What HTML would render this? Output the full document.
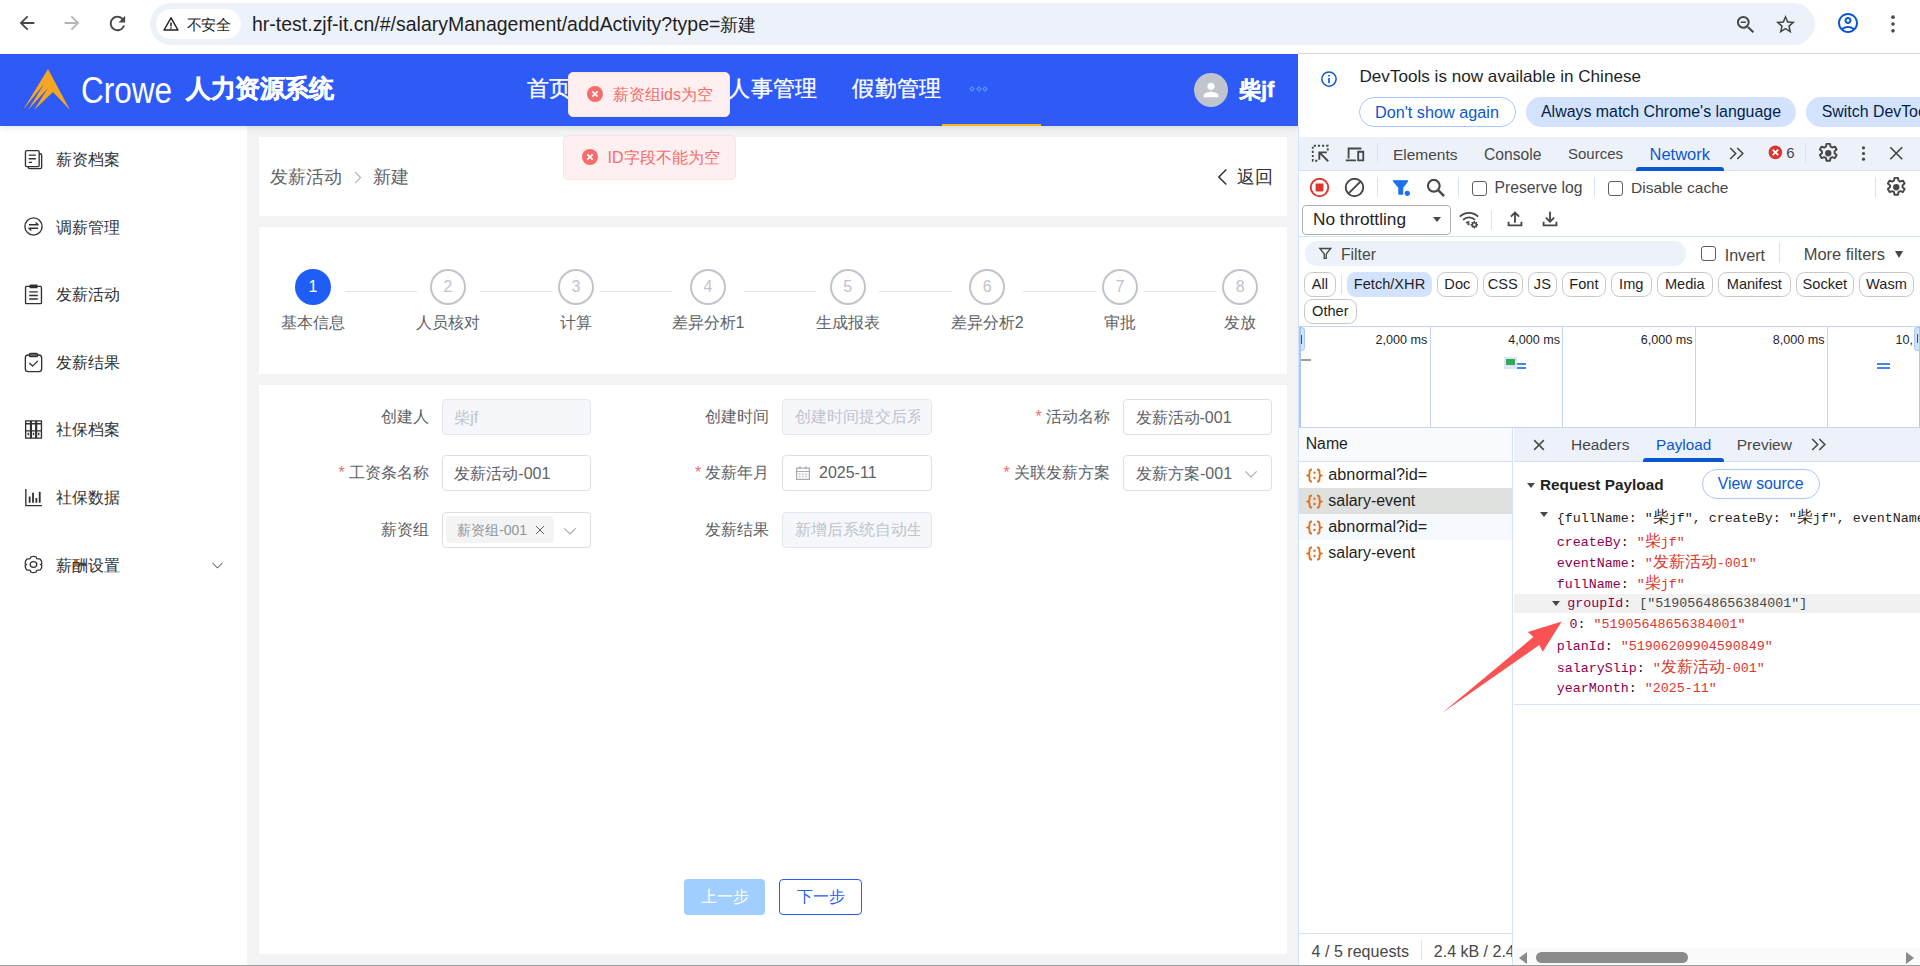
<!DOCTYPE html>
<html><head><meta charset="utf-8"><title>page</title><style>
*{box-sizing:border-box;margin:0;padding:0}
html,body{width:1920px;height:966px;overflow:hidden;background:#fff;font-family:"Liberation Sans",sans-serif}
#r{position:relative;width:1920px;height:966px;overflow:hidden}
.a{position:absolute}
.t{position:absolute;white-space:nowrap}
.c{display:inline-block;width:1em;text-align:center;font-style:normal;white-space:nowrap}
.m{position:absolute;white-space:pre;font-family:"Liberation Mono",monospace;font-size:13.330px;height:20px;line-height:20px}
</style></head><body><div id="r">
<!-- browser toolbar -->
<div class="a" style="left:0px;top:0px;width:1920px;height:54px;background:#fff"></div>
<svg class="a" style="left:16.0px;top:12.0px;" width="22" height="22" viewBox="0 0 24 24"><path fill="#474747" d="M20 11H7.83l5.59-5.59L12 4l-8 8 8 8 1.41-1.41L7.83 13H20v-2z"/></svg>
<svg class="a" style="left:61.0px;top:12.0px;" width="22" height="22" viewBox="0 0 24 24"><path fill="#b4b4b4" d="M4 11h12.17l-5.59-5.59L12 4l8 8-8 8-1.41-1.41L16.17 13H4v-2z"/></svg>
<svg class="a" style="left:105.5px;top:11.5px;" width="23" height="23" viewBox="0 0 24 24"><path fill="#474747" d="M17.65 6.35A7.958 7.958 0 0 0 12 4c-4.42 0-7.99 3.58-7.99 8s3.57 8 7.99 8c3.73 0 6.84-2.55 7.73-6h-2.08A5.99 5.99 0 0 1 12 18c-3.31 0-6-2.69-6-6s2.69-6 6-6c1.66 0 3.14.69 4.22 1.78L13 11h7V4l-2.35 2.35z"/></svg>
<div class="a" style="left:150px;top:3px;width:1665px;height:42px;background:#edf2fa;border-radius:21px"></div>
<div class="a" style="left:156px;top:9px;width:85px;height:30px;background:#fff;border-radius:15px"></div>
<svg class="a" style="left:162.0px;top:15.0px;" width="18" height="18" viewBox="0 0 24 24"><path fill="none" stroke="#1f1f1f" stroke-width="1.9" stroke-linejoin="round" d="M12 3.8 21.3 20H2.7z"/><path stroke="#1f1f1f" stroke-width="2" d="M12 10v5M12 16.3v2"/></svg>
<div class="t" style="top:10.5px;height:29px;line-height:29px;font-size:14.6px;color:#1f1f1f;left:186.5px;"><i class="c">不</i><i class="c">安</i><i class="c">全</i></div>
<div class="t" style="top:4.5px;height:39px;line-height:39px;font-size:19.49px;color:#1f1f1f;left:252px;">hr-test.zjf-it.cn/#/salaryManagement/addActivity?type=<span style="font-size:18px"><i class="c">新</i><i class="c">建</i></span></div>
<svg class="a" style="left:1733.75px;top:12.55px;" width="23.5" height="23.5" viewBox="0 0 24 24"><path fill="#474747" d="M15.5 14h-.79l-.28-.27A6.471 6.471 0 0 0 16 9.5 6.5 6.5 0 1 0 9.5 16c1.61 0 3.09-.59 4.23-1.57l.27.28v.79l5 4.99L20.49 19l-4.99-5zm-6 0C7.01 14 5 11.99 5 9.5S7.01 5 9.5 5 14 7.01 14 9.5 11.99 14 9.5 14zM6.800 8.700h5.400v1.600H6.800z"/></svg>
<svg class="a" style="left:1773.5px;top:12.5px;" width="23" height="23" viewBox="0 0 24 24"><path fill="#474747" d="M22 9.24l-7.19-.62L12 2 9.19 8.63 2 9.24l5.46 4.73L5.82 21 12 17.27 18.18 21l-1.63-7.03L22 9.24zM12 15.4l-3.76 2.27 1-4.28-3.32-2.88 4.38-.38L12 6.1l1.71 4.04 4.38.38-3.32 2.88 1 4.28L12 15.4z"/></svg>
<svg class="a" style="left:1835.5px;top:11.4px;" width="24" height="24" viewBox="0 0 24 24"><path fill="#0b57d0" d="M12 2C6.48 2 2 6.48 2 12s4.48 10 10 10 10-4.48 10-10S17.52 2 12 2zM7.35 18.5C8.66 17.56 10.26 17 12 17s3.34.56 4.65 1.5c-1.31.94-2.91 1.5-4.65 1.5s-3.34-.56-4.65-1.5zm10.79-1.38a9.947 9.947 0 0 0-12.28 0A7.957 7.957 0 0 1 4 12c0-4.42 3.58-8 8-8s8 3.58 8 8c0 1.95-.7 3.73-1.86 5.12zM12 6c-1.93 0-3.5 1.57-3.5 3.5S10.070 13 12 13s3.5-1.57 3.5-3.5S13.93 6 12 6zm0 5c-.83 0-1.5-.67-1.5-1.5S11.17 8 12 8s1.5.67 1.5 1.5S12.83 11 12 11z"/></svg>
<svg class="a" style="left:1880.5px;top:11.5px;" width="24" height="24" viewBox="0 0 24 24"><circle cx="12" cy="5.150" r="1.800" fill="#474747"/><circle cx="12" cy="12" r="1.800" fill="#474747"/><circle cx="12" cy="18.850" r="1.800" fill="#474747"/></svg>
<div class="a" style="left:1298px;top:53px;width:622px;height:1px;background:#d9d9d9"></div>
<!-- app -->
<div class="a" style="left:247px;top:126px;width:1051px;height:840px;background:#f2f3f5"></div>
<div class="a" style="left:0px;top:126px;width:247px;height:840px;background:#fff"></div>
<div class="a" style="left:259px;top:137px;width:1028px;height:79px;background:#fff"></div>
<div class="a" style="left:259px;top:227px;width:1028px;height:147px;background:#fff"></div>
<div class="a" style="left:259px;top:385px;width:1028px;height:569px;background:#fff"></div>
<div class="a" style="left:0px;top:54px;width:1298px;height:72px;background:#2e5bf7;box-shadow:0 2px 5px rgba(0,0,0,.10)"></div>
<svg class="a" style="left:22px;top:68px" width="50" height="44" viewBox="0 0 50 44"><path fill="#f5a623" d="M26 1 L48 42 L31 24 L12 42 L26 20 L6 42 L22 16 L1 42 Z"/></svg>
<div class="t" style="top:53.9px;height:73px;line-height:73px;font-size:36.5px;color:#fff;left:81px;transform:scaleX(0.8628);transform-origin:0 50%;">Crowe</div>
<div class="t" style="top:64.3px;height:49px;line-height:49px;font-size:24.6px;color:#fff;font-weight:bold;left:186px;-webkit-text-stroke:.4px #fff;"><i class="c">人</i><i class="c">力</i><i class="c">资</i><i class="c">源</i><i class="c">系</i><i class="c">统</i></div>
<div class="t" style="top:65.5px;height:45px;line-height:45px;font-size:22.4px;color:#fff;left:526.5px;-webkit-text-stroke:.35px #fff;letter-spacing:.1px;"><i class="c">首</i><i class="c">页</i></div>
<div class="t" style="top:65.5px;height:45px;line-height:45px;font-size:22.4px;color:#fff;left:606px;-webkit-text-stroke:.35px #fff;letter-spacing:.1px;"><i class="c">组</i><i class="c">织</i><i class="c">管</i><i class="c">理</i></div>
<div class="t" style="top:65.5px;height:45px;line-height:45px;font-size:22.4px;color:#fff;left:728px;-webkit-text-stroke:.35px #fff;letter-spacing:.1px;"><i class="c">人</i><i class="c">事</i><i class="c">管</i><i class="c">理</i></div>
<div class="t" style="top:65.5px;height:45px;line-height:45px;font-size:22.4px;color:#fff;left:852px;-webkit-text-stroke:.35px #fff;letter-spacing:.1px;"><i class="c">假</i><i class="c">勤</i><i class="c">管</i><i class="c">理</i></div>
<div class="a" style="left:970px;top:87px;width:4px;height:4px;border:1.200px solid #5fa2ff;transform:rotate(45deg)"></div>
<div class="a" style="left:976.5px;top:87px;width:4px;height:4px;border:1.200px solid #5fa2ff;transform:rotate(45deg)"></div>
<div class="a" style="left:983px;top:87px;width:4px;height:4px;border:1.200px solid #5fa2ff;transform:rotate(45deg)"></div>
<div class="a" style="left:942px;top:123.5px;width:99px;height:2.5px;background:#f8b51e"></div>
<div class="a" style="left:1194px;top:73px;width:34px;height:34px;background:#c0c4cc;border-radius:50%"></div>
<svg class="a" style="left:1200.0px;top:79.0px;" width="22" height="22" viewBox="0 0 24 24"><path fill="#fff" d="M12 12c2.21 0 4-1.79 4-4s-1.79-4-4-4-4 1.790-4 4 1.79 4 4 4zm0 2c-2.67 0-8 1.34-8 4v2h16v-2c0-2.66-5.33-4-8-4z"/></svg>
<div class="t" style="top:68.0px;height:44px;line-height:44px;font-size:22px;color:#fff;font-weight:bold;left:1239px;-webkit-text-stroke:.4px #fff;"><i class="c">柴</i>jf</div>
<svg class="a" style="left:21.5px;top:147.8px;" width="23" height="23" viewBox="0 0 24 24"><path fill="none" stroke="#303133" stroke-width="1.400" stroke-linejoin="round" d="M5.100 2.800h11.300q1.500 0 1.500 1.500v13.600q0 1.500-1.500 1.500H5.100q-1.500 0-1.500-1.500V4.300q0-1.500 1.500-1.500zM7 7.500h7.500M7 11.200h7.500M7 15h3.500M18 6h1q1.500 0 1.500 1.500v12.600q0 1.500-1.500 1.500H8q-1.500 0-1.500-1.500v-.6"/></svg>
<div class="t" style="top:144.0px;height:32px;line-height:32px;font-size:16px;color:#303133;left:56px;"><i class="c">薪</i><i class="c">资</i><i class="c">档</i><i class="c">案</i></div>
<svg class="a" style="left:21.5px;top:215.4px;" width="23" height="23" viewBox="0 0 24 24"><circle cx="12" cy="12" r="9" fill="none" stroke="#303133" stroke-width="1.400" stroke-linejoin="round"/><path fill="none" stroke="#303133" stroke-width="1.400" stroke-linejoin="round" d="M7.200 10.200h9.600l-2.600-2.500M16.800 13.800H7.200l2.600 2.500"/></svg>
<div class="t" style="top:211.6px;height:32px;line-height:32px;font-size:16px;color:#303133;left:56px;"><i class="c">调</i><i class="c">薪</i><i class="c">管</i><i class="c">理</i></div>
<svg class="a" style="left:21.5px;top:283.0px;" width="23" height="23" viewBox="0 0 24 24"><path fill="none" stroke="#303133" stroke-width="1.400" stroke-linejoin="round" d="M4.700 3.600h14.600q1 0 1 1v16q0 1-1 1H4.700q-1 0-1-1v-16q0-1 1-1zM8.500 2.300h7v2.600h-7zM7.500 9.300h9M7.500 13h9M7.500 16.700h9"/></svg>
<div class="t" style="top:279.2px;height:32px;line-height:32px;font-size:16px;color:#303133;left:56px;"><i class="c">发</i><i class="c">薪</i><i class="c">活</i><i class="c">动</i></div>
<svg class="a" style="left:21.5px;top:350.6px;" width="23" height="23" viewBox="0 0 24 24"><path fill="none" stroke="#303133" stroke-width="1.400" stroke-linejoin="round" d="M6.500 4.200h11q3 0 3 3v11.300q0 3-3 3h-11q-3 0-3-3V7.200q0-3 3-3zM8.800 2.500h6.400q1 0 1 1v1.400q0 1-1 1H8.800q-1 0-1-1V3.500q0-1 1-1zM7.800 12.500l3.300 3.300 5.400-5.500"/></svg>
<div class="t" style="top:346.8px;height:32px;line-height:32px;font-size:16px;color:#303133;left:56px;"><i class="c">发</i><i class="c">薪</i><i class="c">结</i><i class="c">果</i></div>
<svg class="a" style="left:21.5px;top:418.2px;" width="23" height="23" viewBox="0 0 24 24"><path fill="none" stroke="#303133" stroke-width="1.400" stroke-linejoin="round" d="M3.800 3h5.500v18H3.800zM9.300 3h5.500v18H9.300zM14.800 3h5.500v18h-5.500zM3.800 6h16.500M3.800 13.500h16.500M6.500 15.500v2.500M12 15.500v2.500M17.500 15.500v2.500"/><path stroke="#303133" stroke-width="2.200" d="M9.300 3v18M14.800 3v18"/></svg>
<div class="t" style="top:414.4px;height:32px;line-height:32px;font-size:16px;color:#303133;left:56px;"><i class="c">社</i><i class="c">保</i><i class="c">档</i><i class="c">案</i></div>
<svg class="a" style="left:21.5px;top:485.8px;" width="23" height="23" viewBox="0 0 24 24"><path fill="none" stroke="#303133" stroke-width="1.400" stroke-linejoin="round" stroke-width="1.600" d="M4 3v17.500h16.800"/><path stroke="#303133" stroke-width="1.900" d="M8 11v6.500M11.500 7v10.500M15 12.500v5M18.500 6v11.500"/></svg>
<div class="t" style="top:482.0px;height:32px;line-height:32px;font-size:16px;color:#303133;left:56px;"><i class="c">社</i><i class="c">保</i><i class="c">数</i><i class="c">据</i></div>
<svg class="a" style="left:21.5px;top:553.4px;" width="23" height="23" viewBox="0 0 24 24"><g transform="translate(0 1.300) scale(1 .89)"><path fill="none" stroke="#303133" stroke-width="1.400" stroke-linejoin="round" d="M9.300 3.200q2.700-1.700 5.400 0l.7 1.900 3.600.6q1.900 2.500 1.700 5.300L19.200 12l1.500 1q.2 2.800-1.700 5.300l-3.600.6-.7 1.900q-2.700 1.700-5.400 0l-.7-1.900-3.600-.6Q3.100 15.800 3.300 13l1.500-1-1.500-1q-.2-2.800 1.700-5.300l3.600-.6z"/><circle cx="12" cy="12" r="3.400" fill="none" stroke="#303133" stroke-width="1.400" stroke-linejoin="round"/></g></svg>
<div class="t" style="top:549.6px;height:32px;line-height:32px;font-size:16px;color:#303133;left:56px;"><i class="c">薪</i><i class="c">酬</i><i class="c">设</i><i class="c">置</i></div>
<svg class="a" style="left:211.2px;top:558.7px;" width="13" height="13" viewBox="0 0 24 24"><path fill="none" stroke="#303133" stroke-width="1.700" d="M3 7.200l9 9.600 9-9.600"/></svg>
<div class="t" style="top:158.5px;height:36px;line-height:36px;font-size:18px;color:#606266;left:270px;"><i class="c">发</i><i class="c">薪</i><i class="c">活</i><i class="c">动</i></div>
<svg class="a" style="left:350.0px;top:169.5px;" width="15" height="15" viewBox="0 0 24 24"><path fill="none" stroke="#a8abb2" stroke-width="1.700" d="M8 3l9 9-9 9"/></svg>
<div class="t" style="top:158.5px;height:36px;line-height:36px;font-size:18px;color:#606266;left:373px;"><i class="c">新</i><i class="c">建</i></div>
<svg class="a" style="left:1213.0px;top:166.5px;" width="20" height="20" viewBox="0 0 24 24"><path fill="none" stroke="#303133" stroke-width="1.800" d="M16 3l-9 9 9 9"/></svg>
<div class="t" style="top:158.5px;height:36px;line-height:36px;font-size:18px;color:#303133;left:1236.5px;"><i class="c">返</i><i class="c">回</i></div>
<div class="a" style="left:345px;top:291px;width:72px;height:1px;background:#dfe2e8"></div>
<div class="a" style="left:480px;top:291px;width:72px;height:1px;background:#dfe2e8"></div>
<div class="a" style="left:600px;top:291px;width:72px;height:1px;background:#dfe2e8"></div>
<div class="a" style="left:744px;top:291px;width:72px;height:1px;background:#dfe2e8"></div>
<div class="a" style="left:879px;top:291px;width:72.5px;height:1px;background:#dfe2e8"></div>
<div class="a" style="left:1023px;top:291px;width:73px;height:1px;background:#dfe2e8"></div>
<div class="a" style="left:1144px;top:291px;width:72px;height:1px;background:#dfe2e8"></div>
<div class="a" style="left:295px;top:269px;width:36px;height:36px;background:#1e5ef7;border-radius:50%"></div>
<div class="t" style="top:271.0px;height:32px;line-height:32px;font-size:16px;color:#fff;left:13px;width:600px;text-align:center;">1</div>
<div class="t" style="top:306.5px;height:32px;line-height:32px;font-size:16px;color:#606266;left:13px;width:600px;text-align:center;"><i class="c">基</i><i class="c">本</i><i class="c">信</i><i class="c">息</i></div>
<div class="a" style="left:430px;top:269px;width:36px;height:36px;border:2px solid #c0c4cc;border-radius:50%;background:#fff"></div>
<div class="t" style="top:271.0px;height:32px;line-height:32px;font-size:16px;color:#c0c4cc;left:148px;width:600px;text-align:center;">2</div>
<div class="t" style="top:306.5px;height:32px;line-height:32px;font-size:16px;color:#606266;left:148px;width:600px;text-align:center;"><i class="c">人</i><i class="c">员</i><i class="c">核</i><i class="c">对</i></div>
<div class="a" style="left:558px;top:269px;width:36px;height:36px;border:2px solid #c0c4cc;border-radius:50%;background:#fff"></div>
<div class="t" style="top:271.0px;height:32px;line-height:32px;font-size:16px;color:#c0c4cc;left:276px;width:600px;text-align:center;">3</div>
<div class="t" style="top:306.5px;height:32px;line-height:32px;font-size:16px;color:#606266;left:276px;width:600px;text-align:center;"><i class="c">计</i><i class="c">算</i></div>
<div class="a" style="left:690px;top:269px;width:36px;height:36px;border:2px solid #c0c4cc;border-radius:50%;background:#fff"></div>
<div class="t" style="top:271.0px;height:32px;line-height:32px;font-size:16px;color:#c0c4cc;left:408px;width:600px;text-align:center;">4</div>
<div class="t" style="top:306.5px;height:32px;line-height:32px;font-size:16px;color:#606266;left:408px;width:600px;text-align:center;"><i class="c">差</i><i class="c">异</i><i class="c">分</i><i class="c">析</i>1</div>
<div class="a" style="left:829.6px;top:269px;width:36px;height:36px;border:2px solid #c0c4cc;border-radius:50%;background:#fff"></div>
<div class="t" style="top:271.0px;height:32px;line-height:32px;font-size:16px;color:#c0c4cc;left:547.6px;width:600px;text-align:center;">5</div>
<div class="t" style="top:306.5px;height:32px;line-height:32px;font-size:16px;color:#606266;left:547.6px;width:600px;text-align:center;"><i class="c">生</i><i class="c">成</i><i class="c">报</i><i class="c">表</i></div>
<div class="a" style="left:969.2px;top:269px;width:36px;height:36px;border:2px solid #c0c4cc;border-radius:50%;background:#fff"></div>
<div class="t" style="top:271.0px;height:32px;line-height:32px;font-size:16px;color:#c0c4cc;left:687.2px;width:600px;text-align:center;">6</div>
<div class="t" style="top:306.5px;height:32px;line-height:32px;font-size:16px;color:#606266;left:687.2px;width:600px;text-align:center;"><i class="c">差</i><i class="c">异</i><i class="c">分</i><i class="c">析</i>2</div>
<div class="a" style="left:1102px;top:269px;width:36px;height:36px;border:2px solid #c0c4cc;border-radius:50%;background:#fff"></div>
<div class="t" style="top:271.0px;height:32px;line-height:32px;font-size:16px;color:#c0c4cc;left:820px;width:600px;text-align:center;">7</div>
<div class="t" style="top:306.5px;height:32px;line-height:32px;font-size:16px;color:#606266;left:820px;width:600px;text-align:center;"><i class="c">审</i><i class="c">批</i></div>
<div class="a" style="left:1222.2px;top:269px;width:36px;height:36px;border:2px solid #c0c4cc;border-radius:50%;background:#fff"></div>
<div class="t" style="top:271.0px;height:32px;line-height:32px;font-size:16px;color:#c0c4cc;left:940.2px;width:600px;text-align:center;">8</div>
<div class="t" style="top:306.5px;height:32px;line-height:32px;font-size:16px;color:#606266;left:940.2px;width:600px;text-align:center;"><i class="c">发</i><i class="c">放</i></div>
<div class="a" style="left:568px;top:72px;width:162px;height:45px;background:#fef0f0;border:1px solid #fde2e2;border-radius:5px"></div>
<svg class="a" style="left:587.0px;top:86.0px;" width="16" height="16" viewBox="0 0 16 16"><circle cx="8" cy="8" r="8" fill="#f56c6c"/><path stroke="#fff" stroke-width="1.7" d="M5.300 5.300l5.400 5.400M10.700 5.300l-5.400 5.400"/></svg>
<div class="t" style="top:78.5px;height:32px;line-height:32px;font-size:16px;color:#f56c6c;left:612.5px;"><i class="c">薪</i><i class="c">资</i><i class="c">组</i>ids<i class="c">为</i><i class="c">空</i></div>
<div class="a" style="left:562.5px;top:135px;width:173px;height:44.5px;background:#fef0f0;border:1px solid #fde2e2;border-radius:5px"></div>
<svg class="a" style="left:581.5px;top:149.0px;" width="16" height="16" viewBox="0 0 16 16"><circle cx="8" cy="8" r="8" fill="#f56c6c"/><path stroke="#fff" stroke-width="1.7" d="M5.300 5.300l5.400 5.400M10.700 5.300l-5.400 5.400"/></svg>
<div class="t" style="top:141.5px;height:32px;line-height:32px;font-size:16px;color:#f56c6c;left:607.5px;">ID<i class="c">字</i><i class="c">段</i><i class="c">不</i><i class="c">能</i><i class="c">为</i><i class="c">空</i></div>
<div class="t" style="top:401.0px;height:32px;line-height:32px;font-size:16px;color:#606266;right:1491.4px;text-align:right;"><i class="c">创</i><i class="c">建</i><i class="c">人</i></div>
<div class="a" style="left:442px;top:399px;width:149px;height:36px;background:#f5f7fa;border:1px solid #e4e7ed;border-radius:4px"></div>
<div class="t" style="top:401.5px;height:32px;line-height:32px;font-size:16px;color:#c0c4cc;left:454.3px;"><i class="c">柴</i>jf</div>
<div class="t" style="top:457.0px;height:32px;line-height:32px;font-size:16px;color:#606266;right:1491.4px;text-align:right;"><span style="color:#f56c6c;margin-right:4px;font-size:16px">*</span><i class="c">工</i><i class="c">资</i><i class="c">条</i><i class="c">名</i><i class="c">称</i></div>
<div class="a" style="left:442px;top:455px;width:149px;height:36px;background:#fff;border:1px solid #dcdfe6;border-radius:4px"></div>
<div class="t" style="top:457.5px;height:32px;line-height:32px;font-size:16px;color:#606266;left:454.3px;"><i class="c">发</i><i class="c">薪</i><i class="c">活</i><i class="c">动</i>-001</div>
<div class="t" style="top:514.0px;height:32px;line-height:32px;font-size:16px;color:#606266;right:1491.4px;text-align:right;"><i class="c">薪</i><i class="c">资</i><i class="c">组</i></div>
<div class="a" style="left:442px;top:512px;width:149px;height:36px;background:#fff;border:1px solid #dcdfe6;border-radius:4px"></div>
<div class="a" style="left:446px;top:516px;width:108px;height:27px;background:#f4f4f5;border-radius:4px"></div>
<div class="t" style="top:516.0px;height:28px;line-height:28px;font-size:14px;color:#909399;left:457px;"><i class="c">薪</i><i class="c">资</i><i class="c">组</i>-001</div>
<svg class="a" style="left:533.6px;top:524.0px;" width="12" height="12" viewBox="0 0 24 24"><path stroke="#606266" stroke-width="2" d="M4 4l16 16M20 4L4 20"/></svg>
<svg class="a" style="left:561.5px;top:522.5px;" width="16" height="16" viewBox="0 0 24 24"><path fill="none" stroke="#a8abb2" stroke-width="1.800" d="M3.500 8l8.500 8.500L20.500 8"/></svg>
<div class="t" style="top:401.0px;height:32px;line-height:32px;font-size:16px;color:#606266;right:1150.7px;text-align:right;"><i class="c">创</i><i class="c">建</i><i class="c">时</i><i class="c">间</i></div>
<div class="a" style="left:782.3px;top:399px;width:149.3px;height:36px;background:#f5f7fa;border:1px solid #e4e7ed;border-radius:4px"></div>
<div class="t" style="left:794.5px;top:401px;height:32px;line-height:32px;font-size:16px;color:#c0c4cc;width:125px;overflow:hidden"><i class="c">创</i><i class="c">建</i><i class="c">时</i><i class="c">间</i><i class="c">提</i><i class="c">交</i><i class="c">后</i><i class="c">系</i><i class="c">统</i><i class="c">自</i><i class="c">动</i><i class="c">生</i><i class="c">成</i></div>
<div class="t" style="top:457.0px;height:32px;line-height:32px;font-size:16px;color:#606266;right:1150.7px;text-align:right;"><span style="color:#f56c6c;margin-right:4px;font-size:16px">*</span><i class="c">发</i><i class="c">薪</i><i class="c">年</i><i class="c">月</i></div>
<div class="a" style="left:782.3px;top:455px;width:149.3px;height:36px;background:#fff;border:1px solid #dcdfe6;border-radius:4px"></div>
<svg class="a" style="left:793.5px;top:464.0px;" width="18" height="18" viewBox="0 0 24 24"><path fill="none" stroke="#a8abb2" stroke-width="1.600" d="M3.500 5.500h17v15h-17zM3.500 10h17M8 3v4M16 3v4"/><path stroke="#a8abb2" stroke-width="1.600" stroke-dasharray="2 2.300" d="M6.500 13.500h12M6.500 17h12"/></svg>
<div class="t" style="top:457.0px;height:32px;line-height:32px;font-size:16px;color:#606266;left:819px;">2025-11</div>
<div class="t" style="top:514.0px;height:32px;line-height:32px;font-size:16px;color:#606266;right:1150.7px;text-align:right;"><i class="c">发</i><i class="c">薪</i><i class="c">结</i><i class="c">果</i></div>
<div class="a" style="left:782.3px;top:512px;width:149.3px;height:36px;background:#f5f7fa;border:1px solid #e4e7ed;border-radius:4px"></div>
<div class="t" style="left:794.5px;top:514px;height:32px;line-height:32px;font-size:16px;color:#c0c4cc;width:125px;overflow:hidden"><i class="c">新</i><i class="c">增</i><i class="c">后</i><i class="c">系</i><i class="c">统</i><i class="c">自</i><i class="c">动</i><i class="c">生</i><i class="c">成</i></div>
<div class="t" style="top:401.0px;height:32px;line-height:32px;font-size:16px;color:#606266;right:810.4px;text-align:right;"><span style="color:#f56c6c;margin-right:4px;font-size:16px">*</span><i class="c">活</i><i class="c">动</i><i class="c">名</i><i class="c">称</i></div>
<div class="a" style="left:1123.3px;top:399px;width:148.7px;height:36px;background:#fff;border:1px solid #dcdfe6;border-radius:4px"></div>
<div class="t" style="top:401.5px;height:32px;line-height:32px;font-size:16px;color:#606266;left:1135.5px;"><i class="c">发</i><i class="c">薪</i><i class="c">活</i><i class="c">动</i>-001</div>
<div class="t" style="top:457.0px;height:32px;line-height:32px;font-size:16px;color:#606266;right:810.4px;text-align:right;"><span style="color:#f56c6c;margin-right:4px;font-size:16px">*</span><i class="c">关</i><i class="c">联</i><i class="c">发</i><i class="c">薪</i><i class="c">方</i><i class="c">案</i></div>
<div class="a" style="left:1123.3px;top:455px;width:148.7px;height:36px;background:#fff;border:1px solid #dcdfe6;border-radius:4px"></div>
<div class="t" style="top:457.5px;height:32px;line-height:32px;font-size:16px;color:#606266;left:1136px;"><i class="c">发</i><i class="c">薪</i><i class="c">方</i><i class="c">案</i>-001</div>
<svg class="a" style="left:1242.5px;top:466.0px;" width="16" height="16" viewBox="0 0 24 24"><path fill="none" stroke="#a8abb2" stroke-width="1.800" d="M3.500 8l8.500 8.500L20.500 8"/></svg>
<div class="a" style="left:684px;top:879px;width:81px;height:36px;background:#a0cfff;border-radius:4px"></div>
<div class="t" style="top:881.0px;height:32px;line-height:32px;font-size:16px;color:#fff;left:424.5px;width:600px;text-align:center;"><i class="c">上</i><i class="c">一</i><i class="c">步</i></div>
<div class="a" style="left:779px;top:879px;width:83px;height:36px;background:#fff;border:1px solid #2e5bf7;border-radius:4px"></div>
<div class="t" style="top:881.0px;height:32px;line-height:32px;font-size:16px;color:#2e5bf7;left:520.5px;width:600px;text-align:center;"><i class="c">下</i><i class="c">一</i><i class="c">步</i></div>
<!-- devtools -->
<div class="a" style="left:1298px;top:54px;width:622px;height:912px;background:#fff"></div>
<div class="a" style="left:1298px;top:126px;width:1px;height:840px;background:#d3e3fd"></div>
<svg class="a" style="left:1320.0px;top:70.0px;" width="18" height="18" viewBox="0 0 24 24"><circle cx="12" cy="12" r="9.500" fill="none" stroke="#0b57d0" stroke-width="2"/><path stroke="#0b57d0" stroke-width="2.200" d="M12 10.500v7M12 6.500v2.200"/></svg>
<div class="t" style="top:60.2px;height:34px;line-height:34px;font-size:17.11px;color:#1f1f1f;left:1359.5px;">DevTools is now available in Chinese</div>
<div class="a" style="left:1359px;top:97px;width:157px;height:30px;border:1px solid #a8c7fa;border-radius:15px;background:#fff"></div>
<div class="t" style="top:96.1px;height:32px;line-height:32px;font-size:16.23px;color:#0b57d0;left:1375px;">Don't show again</div>
<div class="a" style="left:1526px;top:97px;width:270px;height:30px;background:#d3e3fd;border-radius:15px"></div>
<div class="t" style="top:96.1px;height:32px;line-height:32px;font-size:15.91px;color:#041e49;left:1541px;">Always match Chrome's language</div>
<div class="a" style="left:1806px;top:97px;width:130px;height:30px;background:#d3e3fd;border-radius:15px"></div>
<div class="t" style="top:96.1px;height:32px;line-height:32px;font-size:15.9px;color:#041e49;left:1821.7px;">Switch DevTools to Chinese</div>
<div class="a" style="left:1299px;top:137px;width:621px;height:33.5px;background:#edf2fa"></div>
<div class="a" style="left:1299px;top:170px;width:621px;height:1px;background:#d3e3fd"></div>
<svg class="a" style="left:1308.75px;top:142.45px;" width="22.5" height="22.5" viewBox="0 0 24 24"><path fill="none" stroke="#474747" stroke-width="1.900" stroke-dasharray="2.300 2.100" d="M20 9V4H4v16h5"/><path fill="none" stroke="#474747" stroke-width="2" d="M11 11l9.500 9.500M11 19v-8h8"/></svg>
<svg class="a" style="left:1343.5px;top:142.5px;" width="22" height="22" viewBox="0 0 24 24"><path fill="none" stroke="#474747" stroke-width="2" d="M5 17V6h14M2 19h11M15.500 9.500h5.500v9.500h-5.500z"/></svg>
<div class="a" style="left:1377px;top:143.3px;width:1px;height:19.4px;background:#d3e3fd"></div>
<div class="t" style="top:138.5px;height:31px;line-height:31px;font-size:15.47px;color:#474747;left:1393px;">Elements</div>
<div class="t" style="top:138.5px;height:31px;line-height:31px;font-size:15.67px;color:#474747;left:1484px;">Console</div>
<div class="t" style="top:139.0px;height:30px;line-height:30px;font-size:14.99px;color:#474747;left:1568px;">Sources</div>
<div class="t" style="top:137.5px;height:33px;line-height:33px;font-size:16.5px;color:#0b57d0;left:1649.5px;">Network</div>
<div class="a" style="left:1636px;top:167px;width:88px;height:3.5px;background:#0b57d0;border-radius:3px 3px 0 0"></div>
<svg class="a" style="left:1727.0px;top:143.8px;" width="19" height="19" viewBox="0 0 24 24"><path fill="none" stroke="#474747" stroke-width="2" d="M4 5l7 7-7 7M13 5l7 7-7 7"/></svg>
<svg class="a" style="left:1768.1px;top:145.3px;" width="14.8" height="14.8" viewBox="0 0 24 24"><circle cx="12" cy="12" r="11" fill="#dc362e"/><path stroke="#fff" stroke-width="3" d="M7.500 7.500l9 9M16.500 7.500l-9 9"/></svg>
<div class="t" style="top:137.8px;height:30px;line-height:30px;font-size:15px;color:#474747;left:1786.3px;">6</div>
<div class="a" style="left:1805px;top:143.3px;width:1px;height:19.4px;background:#d3e3fd"></div>
<svg class="a" style="left:1815.95px;top:141.05px;" width="24.5" height="24.5" viewBox="0 0 24 24"><path fill="none" stroke="#474747" stroke-width="1.900" stroke-linejoin="round" d="M10.300 2.800h3.400l.5 2.600 1.800 1 2.500-.9 1.700 2.900-2 1.700v2l2 1.700-1.700 2.900-2.500-.900-1.800 1-.5 2.600h-3.400l-.5-2.600-1.800-1-2.500.9-1.700-2.900 2-1.700v-2l-2-1.700 1.700-2.900 2.500.9 1.800-1z"/><circle cx="12" cy="12" r="3.100" fill="#474747"/></svg>
<svg class="a" style="left:1852.8px;top:143.2px;" width="21" height="21" viewBox="0 0 24 24"><circle cx="12" cy="5.500" r="1.800" fill="#474747"/><circle cx="12" cy="12" r="1.800" fill="#474747"/><circle cx="12" cy="18.500" r="1.800" fill="#474747"/></svg>
<svg class="a" style="left:1886.45px;top:143.05px;" width="20.5" height="20.5" viewBox="0 0 24 24"><path stroke="#474747" stroke-width="2" d="M5 5l14 14M19 5L5 19"/></svg>
<svg class="a" style="left:1309.0px;top:176.5px;" width="21" height="21" viewBox="0 0 24 24"><circle cx="12" cy="12" r="10" fill="none" stroke="#dc362e" stroke-width="2.200"/><rect x="7.500" y="7.500" width="9" height="9" rx="1" fill="#dc362e"/></svg>
<svg class="a" style="left:1344.0px;top:176.5px;" width="21" height="21" viewBox="0 0 24 24"><circle cx="12" cy="12" r="10" fill="none" stroke="#474747" stroke-width="2.200"/><path stroke="#474747" stroke-width="2.200" d="M5 19L19 5"/></svg>
<div class="a" style="left:1377px;top:177px;width:1px;height:19.7px;background:#d3e3fd"></div>
<svg class="a" style="left:1390px;top:178px" width="22" height="20" viewBox="1390 178 22 20"><path fill="#1a73e8" stroke="#1a73e8" stroke-width="1.200" stroke-linejoin="round" d="M1393.300 180.800h14.400l-5 6.800v6.500h-3.800v-6.500z"/><circle cx="1407.300" cy="193.300" r="2.600" fill="#1a73e8"/></svg>
<svg class="a" style="left:1424.05px;top:175.95px;" width="23.5" height="23.5" viewBox="0 0 24 24"><circle cx="10" cy="10" r="6" fill="none" stroke="#474747" stroke-width="2.200"/><path stroke="#474747" stroke-width="2.400" d="M14.500 14.500l6 6"/></svg>
<div class="a" style="left:1458px;top:177px;width:1px;height:19.7px;background:#d3e3fd"></div>
<div class="a" style="left:1472px;top:180.5px;width:15px;height:15px;border:1.500px solid #5e5e5e;border-radius:3px;background:#fff"></div>
<div class="t" style="top:172.0px;height:31px;line-height:31px;font-size:15.68px;color:#474747;left:1494.5px;">Preserve log</div>
<div class="a" style="left:1594px;top:177px;width:1px;height:19.7px;background:#d3e3fd"></div>
<div class="a" style="left:1608px;top:180.5px;width:15px;height:15px;border:1.500px solid #5e5e5e;border-radius:3px;background:#fff"></div>
<div class="t" style="top:172.0px;height:31px;line-height:31px;font-size:15.52px;color:#474747;left:1631px;">Disable cache</div>
<div class="a" style="left:1875px;top:177px;width:1px;height:19.7px;background:#d3e3fd"></div>
<svg class="a" style="left:1884.25px;top:175.05px;" width="24.5" height="24.5" viewBox="0 0 24 24"><path fill="none" stroke="#474747" stroke-width="1.900" stroke-linejoin="round" d="M10.300 2.800h3.400l.5 2.600 1.800 1 2.500-.9 1.700 2.900-2 1.700v2l2 1.700-1.700 2.900-2.500-.900-1.800 1-.5 2.600h-3.400l-.5-2.600-1.800-1-2.500.9-1.700-2.900 2-1.700v-2l-2-1.700 1.700-2.900 2.500.9 1.800-1z"/><circle cx="12" cy="12" r="3.100" fill="#474747"/></svg>
<div class="a" style="left:1302px;top:205px;width:148.7px;height:29.7px;border:1px solid #b0b0b0;border-radius:4px;background:#fff"></div>
<div class="t" style="top:202.0px;height:34px;line-height:34px;font-size:17.25px;color:#1f1f1f;left:1313px;">No throttling</div>
<div class="a" style="left:1432.700px;top:217px;border:4.700px solid transparent;border-top:5.200px solid #474747"></div>
<svg class="a" style="left:1458.0px;top:208.0px;" width="22" height="22" viewBox="0 0 24 24"><path fill="none" stroke="#474747" stroke-width="2" d="M2 9.500c5.500-5.500 14.500-5.500 20 0M5.500 13c3.600-3.600 9.400-3.600 13 0M9 16.500c1-1 2.200-1.500 3.300-1.400"/><path fill="#474747" d="M9.500 17.500l3 -1.800v3.600z"/><circle cx="17.800" cy="18.300" r="2.200" fill="none" stroke="#474747" stroke-width="1.700"/><path stroke="#474747" stroke-width="1.500" d="M17.800 14.300v1.500M17.800 20.800v1.500M13.800 18.300h1.500M20.300 18.300h1.500M15 15.500l1 1M19.600 20.100l1 1M20.600 15.500l-1 1M16 20.100l-1 1"/></svg>
<div class="a" style="left:1491px;top:210.3px;width:1px;height:19.4px;background:#d3e3fd"></div>
<svg class="a" style="left:1503.5px;top:208.0px;" width="22" height="22" viewBox="0 0 24 24"><path fill="none" stroke="#474747" stroke-width="2" d="M12 16V5M7.500 9.500L12 5l4.500 4.500M5 15v4h14v-4"/></svg>
<svg class="a" style="left:1538.5px;top:208.0px;" width="22" height="22" viewBox="0 0 24 24"><path fill="none" stroke="#474747" stroke-width="2" d="M12 4v11M7.500 10.500L12 15l4.500-4.500M5 15v4h14v-4"/></svg>
<div class="a" style="left:1299px;top:236px;width:621px;height:1px;background:#d3e3fd"></div>
<div class="a" style="left:1305px;top:241px;width:381px;height:25px;background:#edf2fa;border-radius:12px"></div>
<svg class="a" style="left:1316.75px;top:244.75px;" width="16.5" height="16.5" viewBox="0 0 24 24"><path fill="none" stroke="#474747" stroke-width="2" d="M4 5h16l-6.500 8v6.500h-3V13z"/></svg>
<div class="t" style="top:238.5px;height:32px;line-height:32px;font-size:15.75px;color:#474747;left:1341px;">Filter</div>
<div class="a" style="left:1701px;top:246px;width:15px;height:15px;border:1.500px solid #5e5e5e;border-radius:3px;background:#fff"></div>
<div class="t" style="top:238.5px;height:32px;line-height:32px;font-size:16.11px;color:#474747;left:1724.7px;">Invert</div>
<div class="a" style="left:1779px;top:243.3px;width:1px;height:19.4px;background:#d3e3fd"></div>
<div class="t" style="top:238.0px;height:33px;line-height:33px;font-size:16.44px;color:#474747;left:1803.7px;">More filters</div>
<div class="a" style="left:1895px;top:250.700px;border:4.650px solid transparent;border-top:7px solid #474747"></div>
<div class="a" style="left:1304px;top:272px;width:31.7px;height:24.7px;border:1px solid #c7c7c7;background:#fff;border-radius:8.500px;text-align:center;font-size:14.600px;line-height:23.5px;color:#1f1f1f;white-space:nowrap">All</div>
<div class="a" style="left:1341px;top:274.5px;width:1px;height:19.2px;background:#d3e3fd"></div>
<div class="a" style="left:1347px;top:272px;width:85px;height:24.7px;background:#d3e3fd;border-radius:8.500px;text-align:center;font-size:14.600px;line-height:25.5px;color:#1f1f1f;white-space:nowrap">Fetch/XHR</div>
<div class="a" style="left:1437px;top:272px;width:40.7px;height:24.7px;border:1px solid #c7c7c7;background:#fff;border-radius:8.500px;text-align:center;font-size:14.600px;line-height:23.5px;color:#1f1f1f;white-space:nowrap">Doc</div>
<div class="a" style="left:1483px;top:272px;width:39.7px;height:24.7px;border:1px solid #c7c7c7;background:#fff;border-radius:8.500px;text-align:center;font-size:14.600px;line-height:23.5px;color:#1f1f1f;white-space:nowrap">CSS</div>
<div class="a" style="left:1528px;top:272px;width:28.7px;height:24.7px;border:1px solid #c7c7c7;background:#fff;border-radius:8.500px;text-align:center;font-size:14.600px;line-height:23.5px;color:#1f1f1f;white-space:nowrap">JS</div>
<div class="a" style="left:1562px;top:272px;width:43.7px;height:24.7px;border:1px solid #c7c7c7;background:#fff;border-radius:8.500px;text-align:center;font-size:14.600px;line-height:23.5px;color:#1f1f1f;white-space:nowrap">Font</div>
<div class="a" style="left:1611px;top:272px;width:40.5px;height:24.7px;border:1px solid #c7c7c7;background:#fff;border-radius:8.500px;text-align:center;font-size:14.600px;line-height:23.5px;color:#1f1f1f;white-space:nowrap">Img</div>
<div class="a" style="left:1657px;top:272px;width:55.5px;height:24.7px;border:1px solid #c7c7c7;background:#fff;border-radius:8.500px;text-align:center;font-size:14.600px;line-height:23.5px;color:#1f1f1f;white-space:nowrap">Media</div>
<div class="a" style="left:1718px;top:272px;width:72.6px;height:24.7px;border:1px solid #c7c7c7;background:#fff;border-radius:8.500px;text-align:center;font-size:14.600px;line-height:23.5px;color:#1f1f1f;white-space:nowrap">Manifest</div>
<div class="a" style="left:1796px;top:272px;width:57.7px;height:24.7px;border:1px solid #c7c7c7;background:#fff;border-radius:8.500px;text-align:center;font-size:14.600px;line-height:23.5px;color:#1f1f1f;white-space:nowrap">Socket</div>
<div class="a" style="left:1859px;top:272px;width:55px;height:24.7px;border:1px solid #c7c7c7;background:#fff;border-radius:8.500px;text-align:center;font-size:14.600px;line-height:23.5px;color:#1f1f1f;white-space:nowrap">Wasm</div>
<div class="a" style="left:1304px;top:299.3px;width:52.7px;height:24.4px;border:1px solid #c7c7c7;background:#fff;border-radius:8.500px;text-align:center;font-size:14.600px;line-height:23.2px;color:#1f1f1f;white-space:nowrap">Other</div>
<div class="a" style="left:1299px;top:326.2px;width:621px;height:1px;background:#c4d7f9"></div>
<div class="a" style="left:1430px;top:327px;width:1px;height:100px;background:#c4d7f9"></div>
<div class="a" style="left:1562px;top:327px;width:1px;height:100px;background:#c4d7f9"></div>
<div class="a" style="left:1695px;top:327px;width:1px;height:100px;background:#c4d7f9"></div>
<div class="a" style="left:1827px;top:327px;width:1px;height:100px;background:#c4d7f9"></div>
<div class="t" style="top:327.5px;height:25px;line-height:25px;font-size:12.6px;color:#1f1f1f;right:492.7px;text-align:right;">2,000 ms</div>
<div class="t" style="top:327.5px;height:25px;line-height:25px;font-size:12.6px;color:#1f1f1f;right:360px;text-align:right;">4,000 ms</div>
<div class="t" style="top:327.5px;height:25px;line-height:25px;font-size:12.6px;color:#1f1f1f;right:227.5px;text-align:right;">6,000 ms</div>
<div class="t" style="top:327.5px;height:25px;line-height:25px;font-size:12.6px;color:#1f1f1f;right:95.5px;text-align:right;">8,000 ms</div>
<div class="t" style="top:327.5px;height:25px;line-height:25px;font-size:12.6px;color:#1f1f1f;right:7px;text-align:right;">10,</div>
<div class="a" style="left:1301px;top:358.8px;width:10px;height:2.5px;background:#9c9c9c"></div>
<div class="a" style="left:1504.3px;top:357px;width:12.7px;height:12px;background:#dbe7f8"></div>
<div class="a" style="left:1506.3px;top:359px;width:8.7px;height:5.8px;background:#34a853"></div>
<div class="a" style="left:1517px;top:362.7px;width:9px;height:2px;background:#4285f4"></div>
<div class="a" style="left:1517px;top:366.7px;width:9px;height:2px;background:#4285f4"></div>
<div class="a" style="left:1877.4px;top:362.5px;width:12.5px;height:2.2px;background:#4285f4"></div>
<div class="a" style="left:1877.4px;top:366.9px;width:12.5px;height:2.2px;background:#4285f4"></div>
<div class="a" style="left:1299px;top:327px;width:5.7px;height:23.5px;background:#d3e3fd;border-radius:0 4px 4px 0;border:1px solid #a8c7fa;border-left:0"></div>
<div class="a" style="left:1300.5px;top:334.5px;width:1.3px;height:9px;background:#0b57d0"></div>
<div class="a" style="left:1914.3px;top:327px;width:6px;height:23.5px;background:#d3e3fd;border-radius:4px 0 0 4px;border:1px solid #a8c7fa;border-right:0"></div>
<div class="a" style="left:1917px;top:334px;width:1px;height:9px;background:#0b57d0"></div>
<div class="a" style="left:1299px;top:326px;width:2px;height:102px;background:#a8c7fa"></div>
<div class="a" style="left:1919px;top:326px;width:1px;height:102px;background:#a8c7fa"></div>
<div class="a" style="left:1299px;top:427px;width:621px;height:1px;background:#c4d7f9"></div>
<div class="a" style="left:1299px;top:428px;width:213.5px;height:33.5px;background:#f8fafd"></div>
<div class="a" style="left:1299px;top:461px;width:213.5px;height:1px;background:#d3e3fd"></div>
<div class="t" style="top:427.5px;height:32px;line-height:32px;font-size:15.8px;color:#1f1f1f;left:1305.7px;">Name</div>
<svg class="a" style="left:1305.5px;top:466.5px;" width="17" height="17" viewBox="0 0 24 24"><path fill="none" stroke="#e3701c" stroke-width="2.700" d="M8.500 3.500c-3 0-3.500 1-3.500 3v2.500c0 1.500-.8 2.500-2.200 3 1.400.500 2.200 1.500 2.200 3v2.500c0 2 .5 3 3.500 3M15.500 3.500c3 0 3.500 1 3.500 3v2.500c0 1.500.800 2.500 2.200 3-1.400.500-2.200 1.500-2.200 3v2.500c0 2-.500 3-3.500 3"/><circle cx="12" cy="8" r="1.700" fill="#e3701c"/><circle cx="12" cy="15.500" r="1.700" fill="#e3701c"/></svg>
<div class="t" style="top:458.2px;height:33px;line-height:33px;font-size:16.26px;color:#1f1f1f;left:1328.3px;">abnormal?id=</div>
<div class="a" style="left:1299px;top:488px;width:213.5px;height:26px;background:#dfe1de"></div>
<svg class="a" style="left:1305.5px;top:492.5px;" width="17" height="17" viewBox="0 0 24 24"><path fill="none" stroke="#e3701c" stroke-width="2.700" d="M8.500 3.500c-3 0-3.500 1-3.500 3v2.500c0 1.500-.8 2.500-2.200 3 1.400.500 2.200 1.500 2.200 3v2.500c0 2 .5 3 3.500 3M15.500 3.500c3 0 3.500 1 3.500 3v2.500c0 1.500.800 2.500 2.200 3-1.400.500-2.200 1.500-2.200 3v2.500c0 2-.500 3-3.500 3"/><circle cx="12" cy="8" r="1.700" fill="#e3701c"/><circle cx="12" cy="15.500" r="1.700" fill="#e3701c"/></svg>
<div class="t" style="top:484.7px;height:32px;line-height:32px;font-size:15.97px;color:#1f1f1f;left:1328.3px;">salary-event</div>
<div class="a" style="left:1299px;top:514px;width:213.5px;height:26px;background:#f6f9fd"></div>
<svg class="a" style="left:1305.5px;top:518.5px;" width="17" height="17" viewBox="0 0 24 24"><path fill="none" stroke="#e3701c" stroke-width="2.700" d="M8.500 3.500c-3 0-3.500 1-3.500 3v2.500c0 1.500-.8 2.500-2.200 3 1.400.500 2.200 1.500 2.200 3v2.500c0 2 .5 3 3.500 3M15.500 3.500c3 0 3.500 1 3.500 3v2.500c0 1.500.800 2.500 2.200 3-1.400.500-2.200 1.500-2.200 3v2.500c0 2-.500 3-3.500 3"/><circle cx="12" cy="8" r="1.700" fill="#e3701c"/><circle cx="12" cy="15.500" r="1.700" fill="#e3701c"/></svg>
<div class="t" style="top:510.2px;height:33px;line-height:33px;font-size:16.26px;color:#1f1f1f;left:1328.3px;">abnormal?id=</div>
<svg class="a" style="left:1305.5px;top:544.5px;" width="17" height="17" viewBox="0 0 24 24"><path fill="none" stroke="#e3701c" stroke-width="2.700" d="M8.500 3.500c-3 0-3.500 1-3.500 3v2.500c0 1.500-.8 2.500-2.200 3 1.400.500 2.200 1.500 2.200 3v2.500c0 2 .5 3 3.500 3M15.500 3.500c3 0 3.500 1 3.500 3v2.500c0 1.500.800 2.500 2.200 3-1.400.500-2.200 1.500-2.200 3v2.500c0 2-.500 3-3.500 3"/><circle cx="12" cy="8" r="1.700" fill="#e3701c"/><circle cx="12" cy="15.500" r="1.700" fill="#e3701c"/></svg>
<div class="t" style="top:536.7px;height:32px;line-height:32px;font-size:15.97px;color:#1f1f1f;left:1328.3px;">salary-event</div>
<div class="a" style="left:1512px;top:428px;width:1px;height:538px;background:#d3e3fd"></div>
<div class="a" style="left:1299px;top:933px;width:213.5px;height:1px;background:#d3e3fd"></div>
<div class="t" style="top:934.5px;height:32px;line-height:32px;font-size:16.07px;color:#474747;left:1311.6px;">4 / 5 requests</div>
<div class="a" style="left:1421px;top:940px;width:1px;height:19.7px;background:#d3e3fd"></div>
<div class="t" style="left:1433.800px;top:936px;height:32px;line-height:32px;font-size:16px;color:#474747;width:78.500px;overflow:hidden">2.4 kB / 2.4 kB transferred</div>
<div class="a" style="left:1513.5px;top:428px;width:406.5px;height:33px;background:#edf2fa"></div>
<div class="a" style="left:1513.5px;top:461px;width:406.5px;height:1px;background:#d3e3fd"></div>
<svg class="a" style="left:1529.5px;top:435.5px;" width="18" height="18" viewBox="0 0 24 24"><path stroke="#474747" stroke-width="2" d="M5.500 5.500l13 13M18.500 5.500l-13 13"/></svg>
<div class="t" style="top:429.0px;height:31px;line-height:31px;font-size:15.45px;color:#474747;left:1571px;">Headers</div>
<div class="t" style="top:429.0px;height:31px;line-height:31px;font-size:15.3px;color:#0b57d0;left:1656px;">Payload</div>
<div class="a" style="left:1643px;top:458px;width:81px;height:3.5px;background:#0b57d0;border-radius:3px 3px 0 0"></div>
<div class="t" style="top:429.0px;height:31px;line-height:31px;font-size:15.55px;color:#474747;left:1736.7px;">Preview</div>
<svg class="a" style="left:1809.0px;top:434.5px;" width="19" height="19" viewBox="0 0 24 24"><path fill="none" stroke="#474747" stroke-width="2" d="M4 5l7 7-7 7M13 5l7 7-7 7"/></svg>
<div class="a" style="left:1526.600px;top:483px;border:4.800px solid transparent;border-top:5.400px solid #474747"></div>
<div class="t" style="top:468.5px;height:31px;line-height:31px;font-size:15.33px;color:#1f1f1f;font-weight:bold;left:1540px;">Request Payload</div>
<div class="a" style="left:1702.3px;top:469px;width:117.7px;height:29.6px;border:1px solid #a8c7fa;border-radius:15px;background:#fff"></div>
<div class="t" style="top:467.8px;height:32px;line-height:32px;font-size:15.8px;color:#0b57d0;left:1717.8px;">View source</div>
<div class="a" style="left:1539.700px;top:512.200px;border:4.800px solid transparent;border-top:5.400px solid #474747"></div>
<div class="a" style="left:1513.500px;top:505px;width:406.500px;height:22px;overflow:hidden"><div class="m" style="left:43.300px;top:3px;color:#1f1f1f">{fullName: "<span style="font-size:16px"><i class="c">柴</i></span>jf", createBy: "<span style="font-size:16px"><i class="c">柴</i></span>jf", eventName: "<span style="font-size:16px"><i class="c">发</i><i class="c">薪</i><i class="c">活</i><i class="c">动</i></span>-001", groupId: [...]}</div></div>
<div class="m" style="left:1556.8px;top:532.4px"><span style="color:#8e004b">createBy</span><span style="color:#1f1f1f">: </span><span style="color:#dc362e">"<span style="font-size:16px"><i class="c">柴</i></span>jf"</span></div>
<div class="m" style="left:1556.8px;top:552.7px"><span style="color:#8e004b">eventName</span><span style="color:#1f1f1f">: </span><span style="color:#dc362e">"<span style="font-size:16px"><i class="c">发</i><i class="c">薪</i><i class="c">活</i><i class="c">动</i></span>-001"</span></div>
<div class="m" style="left:1556.8px;top:573.6px"><span style="color:#8e004b">fullName</span><span style="color:#1f1f1f">: </span><span style="color:#dc362e">"<span style="font-size:16px"><i class="c">柴</i></span>jf"</span></div>
<div class="a" style="left:1513.5px;top:593.5px;width:406.5px;height:19.5px;background:#f1f1f1"></div>
<div class="a" style="left:1551.700px;top:600.800px;border:4.800px solid transparent;border-top:5.400px solid #474747"></div>
<div class="m" style="left:1567.2px;top:593.9px"><span style="color:#8e004b">groupId</span><span style="color:#1f1f1f">: </span><span style="color:#474747">["51905648656384001"]</span></div>
<div class="m" style="left:1569.6px;top:614.8px"><span style="color:#8e004b">0</span><span style="color:#1f1f1f">: </span><span style="color:#dc362e">"51905648656384001"</span></div>
<div class="m" style="left:1556.8px;top:637.4px"><span style="color:#8e004b">planId</span><span style="color:#1f1f1f">: </span><span style="color:#dc362e">"51906209904590849"</span></div>
<div class="m" style="left:1556.8px;top:657.7px"><span style="color:#8e004b">salarySlip</span><span style="color:#1f1f1f">: </span><span style="color:#dc362e">"<span style="font-size:16px"><i class="c">发</i><i class="c">薪</i><i class="c">活</i><i class="c">动</i></span>-001"</span></div>
<div class="m" style="left:1556.8px;top:679.1px"><span style="color:#8e004b">yearMonth</span><span style="color:#1f1f1f">: </span><span style="color:#dc362e">"2025-11"</span></div>
<div class="a" style="left:1513.5px;top:704px;width:406.5px;height:1px;background:#d3e3fd"></div>
<svg class="a" style="left:1430px;top:610px" width="140" height="112" viewBox="1430 610 140 112"><path fill="#f85252" d="M1442.400 712.800 L1533.400 637 L1527.900 632 L1561.700 621.400 L1542.800 651.700 L1539.300 645 Z"/></svg>
<div class="a" style="left:1513.5px;top:947.5px;width:406.5px;height:18px;background:#fafafa"></div>
<div class="a" style="left:1518.500px;top:951.500px;border:6px solid transparent;border-right:8.500px solid #8b8b8b;border-left:0"></div>
<div class="a" style="left:1905.500px;top:951.500px;border:6px solid transparent;border-left:8.500px solid #8b8b8b;border-right:0"></div>
<div class="a" style="left:1536px;top:952px;width:152px;height:11px;background:#8b8b8b;border-radius:6px"></div>
<div class="a" style="left:0;top:964.600px;width:1920px;height:1.400px;background:#9aa19d"></div>
</div></body></html>
